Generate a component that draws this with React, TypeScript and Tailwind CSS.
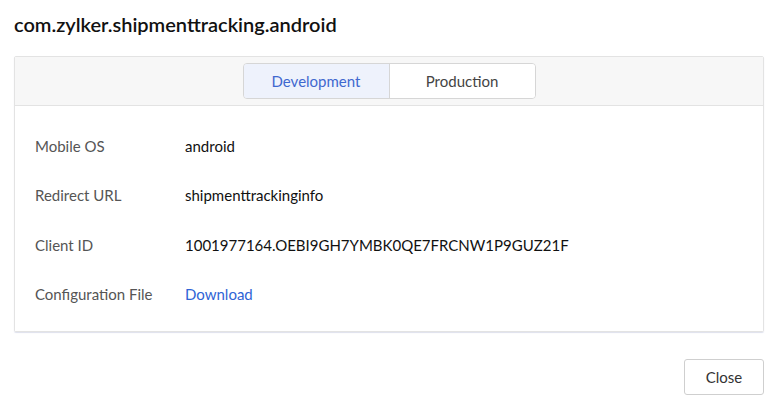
import { useState } from 'react';

const ROWS: { label: string; value: string; link?: boolean }[] = [
  { label: 'Mobile OS', value: 'android' },
  { label: 'Redirect URL', value: 'shipmenttrackinginfo' },
  { label: 'Client ID', value: '1001977164.OEBI9GH7YMBK0QE7FRCNW1P9GUZ21F' },
  { label: 'Configuration File', value: 'Download', link: true },
];

export default function App() {
  const [env, setEnv] = useState<'dev' | 'prod'>('dev');

  return (
    <div className="w-[781px] h-[402px] bg-white font-['Lato','Liberation_Sans',sans-serif] px-[14px]">
      <h1 className="pt-[11px] h-[56px] text-[20px] font-semibold text-[#111] leading-[26px]">
        com.zylker.shipmenttracking.android
      </h1>

      <div className="w-[750px] border border-[#e3e3e3] rounded-[2px] shadow-[0_1px_1px_rgba(200,205,225,0.6)]">
        <div className="h-[49px] bg-[#f7f7f7] border-b border-[#e3e3e3] flex items-center justify-center">
          <div className="flex h-[36px] border border-[#d6d6d6] rounded-[4px] overflow-hidden text-[15px]">
            <button
              onClick={() => setEnv('dev')}
              className={'w-[145px] ' + (env === 'dev' ? 'bg-[#eef2fc] text-[#3f68cf]' : 'bg-white text-[#444]')}
            >
              Development
            </button>
            <button
              onClick={() => setEnv('prod')}
              className={'w-[146px] border-l border-[#d6d6d6] ' + (env === 'prod' ? 'bg-[#eef2fc] text-[#3f68cf]' : 'bg-white text-[#444]')}
            >
              Production
            </button>
          </div>
        </div>

        <div className="pt-[15px] pb-[12px] px-[20px] bg-white">
          {ROWS.map(r => (
            <div key={r.label} className="h-[49.5px] flex items-center text-[15px]">
              <span className="w-[150px] text-[#555]">{r.label}</span>
              {r.link ? (
                <a href="#" className="text-[#2f64d6]">{r.value}</a>
              ) : (
                <span className="text-[#111]">{r.value}</span>
              )}
            </div>
          ))}
        </div>
      </div>

      <div className="flex justify-end w-[750px] mt-[27px]">
        <button className="w-[80px] h-[36px] border border-[#cfcfcf] rounded-[3px] bg-white text-[15px] text-[#333]">
          Close
        </button>
      </div>
    </div>
  );
}
